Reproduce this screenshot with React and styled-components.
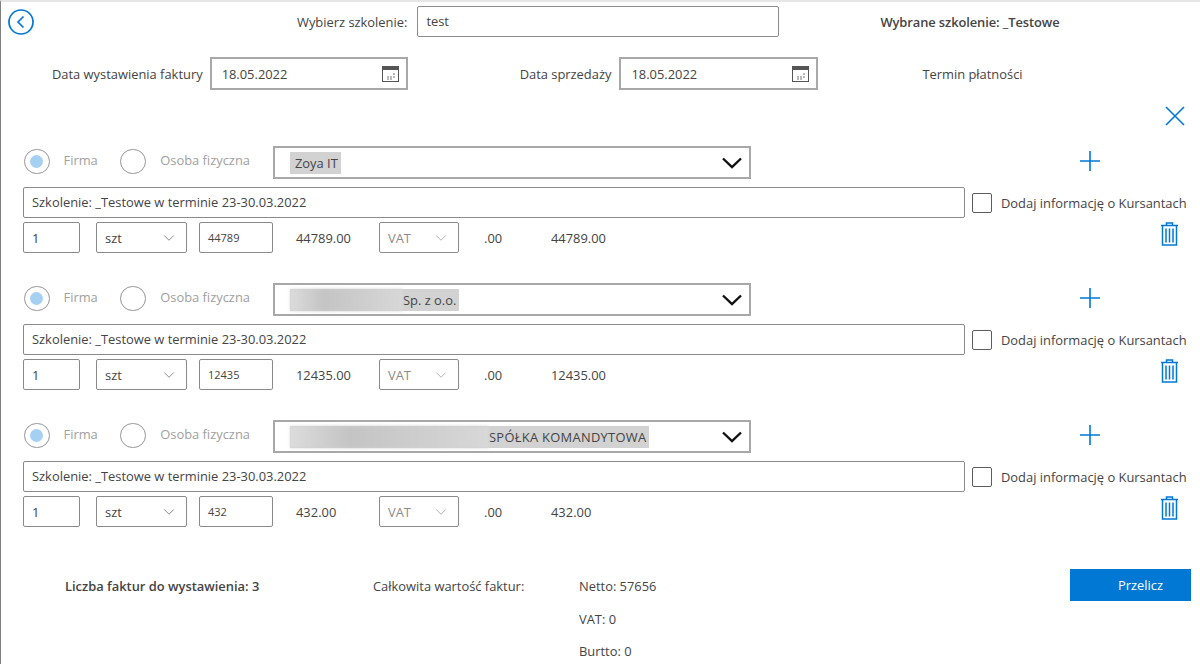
import styled, { createGlobalStyle } from 'styled-components';
import { ChevronDown } from 'lucide-react';

const GlobalStyle = createGlobalStyle`
  html, body {
    margin: 0;
    padding: 0;
    background: #fff;
  }
  body {
    font-family: "Open Sans", "Liberation Sans", sans-serif;
    font-size: 12.9px;
    color: #444;
  }
`;

const Page = styled.div`
  width: 1200px;
  height: 664px;
  box-sizing: border-box;
  border-top: 2px solid #e6e6e6;
  border-left: 1px solid #808080;
  overflow: hidden;
`;

const TopRow = styled.div`
  display: flex;
  align-items: center;
  height: 31px;
  margin-top: 4px;
  padding-left: 7px;
`;

const DateRow = styled.div`
  display: flex;
  align-items: center;
  height: 33px;
  margin-top: 20px;
  padding-left: 51px;
`;

const BackButton = styled.div`
  width: 26px;
  height: 26px;
  color: #0078d4;
`;

const Label = styled.span`
  white-space: nowrap;
  margin-left: ${p => p.$left || 0}px;
  margin-right: ${p => p.$right || 0}px;
  font-weight: ${p => (p.$bold ? 600 : 400)};
  letter-spacing: ${p => (p.$bold ? '-0.08px' : 'normal')};
`;

const SearchInput = styled.div`
  width: 362px;
  height: 31px;
  box-sizing: border-box;
  border: 1px solid #8a8a8a;
  border-radius: 2px;
  padding-left: 8px;
  line-height: 29px;
`;

const DateField = styled.div`
  width: ${p => p.$width}px;
  height: 33px;
  box-sizing: border-box;
  border: 2px solid #a8a8a8;
  display: flex;
  align-items: center;
  justify-content: space-between;
  padding: 0 7px 0 10px;
`;

const CloseRow = styled.div`
  display: flex;
  justify-content: flex-end;
  height: 20px;
  margin-top: 16px;
  padding-right: 15px;
  color: #0078d4;
`;

const Invoice = styled.div`
  margin-top: ${p => p.$top}px;
  padding-left: 22px;
`;

const PartyRow = styled.div`
  display: flex;
  align-items: center;
  height: 33px;
`;

const Radio = styled.span`
  width: 25.5px;
  height: 25.5px;
  box-sizing: border-box;
  border: 1.5px solid #959595;
  border-radius: 50%;
  display: flex;
  align-items: center;
  justify-content: center;
  flex: none;
  margin-left: ${p => p.$left}px;
  margin-bottom: 2px;
  &::after {
    content: '';
    display: ${p => (p.$checked ? 'block' : 'none')};
    width: 13px;
    height: 13px;
    border-radius: 50%;
    background: #a6d0f2;
  }
`;

const RadioLabel = styled.span`
  color: #a0a0a0;
  white-space: nowrap;
  margin-left: ${p => p.$left}px;
  margin-bottom: 5px;
`;

const CompanySelect = styled.div`
  width: 478px;
  height: 33px;
  box-sizing: border-box;
  border: 2px solid #a8a8a8;
  margin-left: 23px;
  padding: 0 7px 0 15px;
  display: flex;
  justify-content: space-between;
  align-items: center;
`;

const Selected = styled.span`
  display: flex;
  align-items: center;
  height: 22px;
  background: #d2d2d2;
  padding: 0 3px 0 ${p => (p.$redacted ? 0 : 5)}px;
  white-space: nowrap;
  letter-spacing: ${p => (p.$wide ? '0.3px' : 'normal')};
`;

const Redacted = styled.span`
  display: block;
  width: ${p => p.$width}px;
  height: 22px;
  background: linear-gradient(90deg, #dcdcdc, #c4c4c4 30%, #cfcfcf 70%, #d8d8d8);
  filter: blur(1.5px);
`;

const AddButton = styled.div`
  margin-left: auto;
  margin-right: 99px;
  margin-bottom: 3px;
  width: 22px;
  height: 22px;
  color: #0078d4;
`;

const TextRow = styled.div`
  display: flex;
  align-items: center;
  margin-top: 8px;
`;

const TextField = styled.div`
  width: 942px;
  height: 31px;
  box-sizing: border-box;
  border: 1px solid #8a8a8a;
  border-radius: 2px;
  padding-left: 8px;
  line-height: 29px;
  flex: none;
`;

const Checkbox = styled.span`
  width: 20px;
  height: 20px;
  box-sizing: border-box;
  border: 1.5px solid #5c5c5c;
  border-radius: 2px;
  margin: 0 9px 0 7px;
  flex: none;
`;

const ItemRow = styled.div`
  display: flex;
  align-items: center;
  height: 31px;
  margin-top: 4px;
`;

const Cell = styled.div`
  width: ${p => p.$width}px;
  height: 31px;
  box-sizing: border-box;
  border: 1px solid #8a8a8a;
  border-radius: 2px;
  margin-left: ${p => p.$left || 0}px;
  padding: 0 8px;
  display: flex;
  align-items: center;
  justify-content: space-between;
  font-size: ${p => p.$size || 12.9}px;
  color: ${p => p.$color || '#444'};
  flex: none;
`;

const Amount = styled.span`
  width: ${p => p.$width}px;
  margin-left: ${p => p.$left}px;
  flex: none;
`;

const TrashButton = styled.div`
  margin-left: auto;
  margin-right: 21px;
  width: 19px;
  height: 24px;
  color: #0078d4;
  align-self: flex-start;
`;

const Footer = styled.div`
  display: flex;
  align-items: flex-start;
  margin-top: 42px;
  padding-left: 64px;
`;

const FooterText = styled.span`
  line-height: 18px;
  margin-top: 8px;
  white-space: nowrap;
  font-weight: ${p => (p.$bold ? 600 : 400)};
  width: ${p => p.$width}px;
  flex: none;
`;

const Totals = styled.div`
  display: flex;
  flex-direction: column;
  gap: 14.5px;
  padding-top: 8px;
  width: 491px;
  flex: none;
  line-height: 18px;
`;

const SubmitButton = styled.div`
  width: 121px;
  height: 32px;
  background: #0078d4;
  color: #fff;
  line-height: 32px;
  padding-left: 48px;
  box-sizing: border-box;
  flex: none;
`;

const CalendarIcon = () => (
  <svg width="17" height="16" viewBox="0 0 17 16" fill="none">
    <rect x="0.5" y="0.5" width="16" height="15" stroke="#555" />
    <rect x="1" y="1" width="15" height="3" fill="#555" />
    <path d="M5 11h2M5 13h2M8 11h2M8 13h2M11 8h2M11 11h2" stroke="#777" />
  </svg>
);

const BackIcon = () => (
  <svg width="26" height="26" viewBox="0 0 26 26" fill="none" stroke="currentColor" strokeWidth="1.7">
    <circle cx="13" cy="13" r="12" />
    <path d="M15.5 7.5 10 13l5.5 5.5" />
  </svg>
);

const CloseIcon = () => (
  <svg width="20" height="20" viewBox="0 0 20 20" fill="none" stroke="currentColor" strokeWidth="1.6">
    <path d="M1 1l18 18M19 1 1 19" />
  </svg>
);

const PlusIcon = () => (
  <svg width="22" height="22" viewBox="0 0 22 22" fill="none" stroke="currentColor" strokeWidth="1.6">
    <path d="M11 1v20M1 11h20" />
  </svg>
);

const SelectChevron = () => (
  <svg width="20" height="12" viewBox="0 0 20 12" fill="none" stroke="#111" strokeWidth="2.4">
    <path d="M1 1.5l9 8.5 9-8.5" />
  </svg>
);

const TrashIcon = () => (
  <svg width="19" height="24" viewBox="0 0 19 24" fill="none" stroke="currentColor" strokeWidth="1.5">
    <path d="M1 3.5h17M6.5 3V1h6v2" />
    <path d="M2.5 4v19h14V4" />
    <path d="M6 6.5v14M9.5 6.5v14M13 6.5v14" />
  </svg>
);

const invoices = [
  { top: 20, amount: '44789', company: 'Zoya IT' },
  { top: 30, amount: '12435', company: 'Sp. z o.o.', blur: 113 },
  { top: 30, amount: '432', company: 'SPÓŁKA KOMANDYTOWA', blur: 199, wide: true },
];

const InvoiceBlock = ({ top, amount, company, blur, wide }) => (
  <Invoice $top={top}>
    <PartyRow>
      <Radio $left={1} $checked />
      <RadioLabel $left={14}>Firma</RadioLabel>
      <Radio $left={22.5} />
      <RadioLabel $left={14.5}>Osoba fizyczna</RadioLabel>
      <CompanySelect>
        <Selected $redacted={!!blur} $wide={wide}>
          {blur && <Redacted $width={blur} />}
          {company}
        </Selected>
        <SelectChevron />
      </CompanySelect>
      <AddButton><PlusIcon /></AddButton>
    </PartyRow>
    <TextRow>
      <TextField>Szkolenie: _Testowe w terminie 23-30.03.2022</TextField>
      <Checkbox />
      <span>Dodaj informację o Kursantach</span>
    </TextRow>
    <ItemRow>
      <Cell $width={57}>1</Cell>
      <Cell $width={91} $left={16}>
        szt
        <ChevronDown size={18} strokeWidth={1} color="#666" />
      </Cell>
      <Cell $width={74} $left={12} $size={11}>{amount}</Cell>
      <Amount $width={83} $left={23}>{amount}.00</Amount>
      <Cell $width={80} $color="#8a8a8a">
        VAT
        <ChevronDown size={18} strokeWidth={1} color="#999" />
      </Cell>
      <Amount $width={67} $left={25}>.00</Amount>
      <Amount $width={60} $left={0}>{amount}.00</Amount>
      <TrashButton><TrashIcon /></TrashButton>
    </ItemRow>
  </Invoice>
);

const App = () => (
  <>
    <GlobalStyle />
    <Page>
      <TopRow>
        <BackButton><BackIcon /></BackButton>
        <Label $left={263} $right={10}>Wybierz szkolenie:</Label>
        <SearchInput>test</SearchInput>
        <Label $left={101} $bold>Wybrane szkolenie: _Testowe</Label>
      </TopRow>
      <DateRow>
        <Label $right={7}>Data wystawienia faktury</Label>
        <DateField $width={198}>18.05.2022<CalendarIcon /></DateField>
        <Label $left={112} $right={8}>Data sprzedaży</Label>
        <DateField $width={199}>18.05.2022<CalendarIcon /></DateField>
        <Label $left={104}>Termin płatności</Label>
      </DateRow>
      <CloseRow><CloseIcon /></CloseRow>
      {invoices.map(item => <InvoiceBlock key={item.amount} {...item} />)}
      <Footer>
        <FooterText $bold $width={308}>Liczba faktur do wystawienia: 3</FooterText>
        <FooterText $width={206}>Całkowita wartość faktur:</FooterText>
        <Totals>
          <span>Netto: 57656</span>
          <span>VAT: 0</span>
          <span>Burtto: 0</span>
        </Totals>
        <SubmitButton>Przelicz</SubmitButton>
      </Footer>
    </Page>
  </>
);

export default App;
